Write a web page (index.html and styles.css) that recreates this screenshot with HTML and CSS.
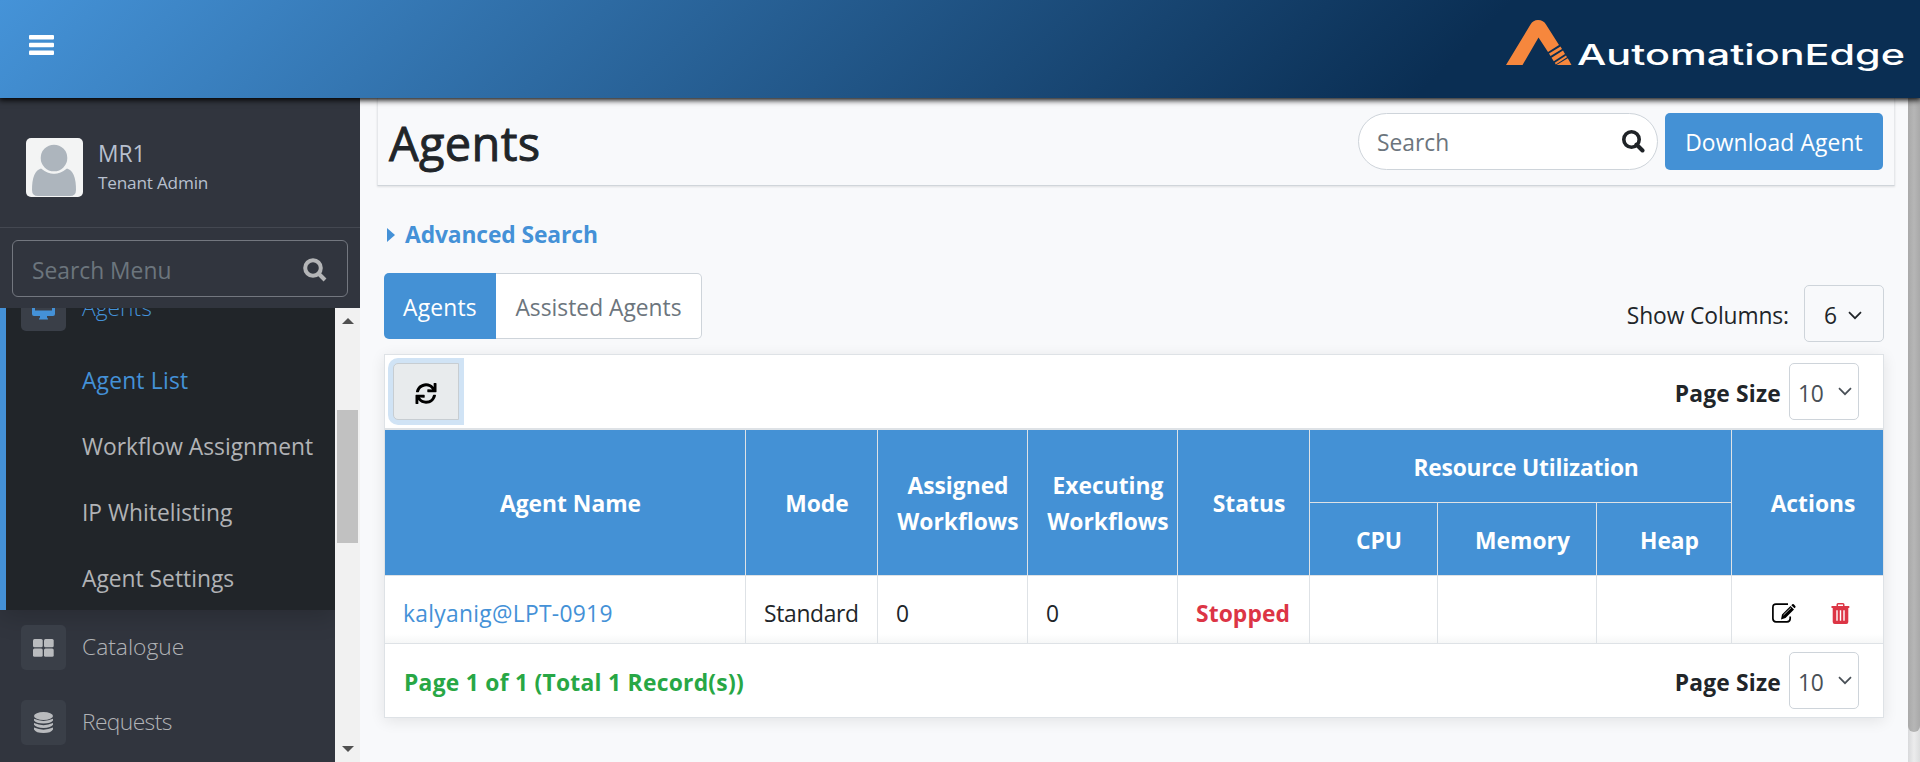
FILE: index.html
```html
<!DOCTYPE html>
<html lang="en">
<head>
<meta charset="utf-8">
<title>Agents</title>
<link rel="stylesheet" href="styles.css">
</head>
<body>
<header class="topbar">
  <svg class="burger" width="25" height="20" viewBox="0 0 25 20"><rect y="0" width="25" height="4.6" rx="1"/><rect y="7.7" width="25" height="4.6" rx="1"/><rect y="15.4" width="25" height="4.6" rx="1"/></svg>
  <svg class="logo" width="400" height="60" viewBox="0 0 400 60">
    <path fill="#f6873d" d="M0 47 24.500 6.500Q27 2 32 2Q37.500 2 40 6.500L53 27 42 34 32.500 19.500 16.500 47Z"/>
    <path fill="#f6873d" d="M43 35.500 54.500 28.500 56 31 44.500 38ZM45.500 39.800 57 32.500 59 36 47.800 43.200ZM48.800 44.700 60 37.600 61 39.200 49.800 46.400ZM50.500 47 61.800 40.200 65.500 47Z"/>
    <text x="71" y="46.500" textLength="328" lengthAdjust="spacingAndGlyphs">AutomationEdge</text>
  </svg>
</header>
<div class="shell">
  <aside class="sidebar">
    <div class="profile">
      <svg class="avatar" width="57" height="59" viewBox="0 0 57 59"><rect width="57" height="59" rx="5" fill="#f3f4f4"/><path fill="#adb5bd" d="M15 30.500Q28 41 41 30.500Q50 33 50 52Q50 58 44 58H12Q6 58 6 52Q6 33 15 30.500Z"/><circle cx="28" cy="20" r="14.300" fill="#adb5bd" stroke="#f3f4f4" stroke-width="2"/></svg>
      <div class="who"><span class="who-name">MR1</span><span class="who-role">Tenant Admin</span></div>
    </div>
    <div class="menu-search"><div class="menu-input"><span>Search Menu</span>
      <svg width="24" height="24" viewBox="0 0 24 24" fill="none" stroke="#b4b5b7" stroke-width="4"><circle cx="10" cy="10" r="7.800"/><path d="M15.500 15.500 22 22"/></svg></div></div>
    <div class="menu-wrap">
      <nav class="menu">
        <section class="menu-active">
          <div class="item item-active"><i class="ico"><svg width="23" height="22" viewBox="0 0 23 22"><path fill="#4491d7" d="M2 0H21Q23 0 23 2V16Q23 18 21 18H15V19.500Q16 20 16 21.500H7Q7 20 8 19.500V18H2Q0 18 0 16V2Q0 0 2 0Z"/><path fill="#3a3f48" d="M3 3H20V12.500H3Z"/></svg></i><span>Agents</span></div>
          <a class="sub sub-on">Agent List</a>
          <a class="sub">Workflow Assignment</a>
          <a class="sub">IP Whitelisting</a>
          <a class="sub">Agent Settings</a>
        </section>
        <div class="item"><i class="ico"><svg width="21" height="18" viewBox="0 0 21 18" fill="#b9bbbe"><rect width="9.700" height="8.300" rx="1.500"/><rect x="11" width="9.700" height="8.300" rx="1.500"/><rect y="9.400" width="9.700" height="8.300" rx="1.500"/><rect x="11" y="9.400" width="9.700" height="8.300" rx="1.500"/></svg></i><span>Catalogue</span></div>
        <div class="item"><i class="ico"><svg width="19" height="21" viewBox="0 0 19 21" fill="#b9bbbe"><ellipse cx="9.500" cy="4" rx="9.500" ry="4"/><path d="M0 6.800Q9.500 11 19 6.800V8.500Q17 11.500 9.500 11.500Q2 11.500 0 8.500ZM0 11.100Q9.500 15.300 19 11.100V12.800Q17 15.900 9.500 15.900Q2 15.900 0 12.800ZM0 15.600Q9.500 19.800 19 15.600V17.500Q17 21 9.500 21Q2 21 0 17.500Z"/></svg></i><span class="tight">Requests</span></div>
      </nav>
      <div class="sbar"><b class="up"></b><b class="thumb"></b><b class="down"></b></div>
    </div>
  </aside>
  <main class="main">
    <div class="page-head">
      <h1>Agents</h1>
      <div class="pill"><span>Search</span><svg width="23" height="23" viewBox="0 0 23 23" fill="none" stroke="#1f2327" stroke-width="3.600"><circle cx="9.500" cy="9.500" r="7.700"/><path d="M14.500 14.500 20.500 20.500" stroke-width="4" stroke-linecap="round"/></svg></div>
      <button class="download"><span>Download Agent</span></button>
    </div>
    <div class="adv"><i></i><span>Advanced Search</span></div>
    <div class="tools">
      <div class="tabs"><span class="tab tab-on">Agents</span><span class="tab">Assisted Agents</span></div>
      <div class="cols"><span class="cols-label">Show Columns:</span><div class="cols-sel">6<svg width="14" height="9" viewBox="0 0 14 9"><path d="M1 1.200 7 7.200 13 1.200"/></svg></div></div>
    </div>
    <div class="card">
      <div class="bar bar-top">
        <button class="refresh"><svg width="22" height="21" viewBox="0 0 512 512"><path d="M440.650 12.570l4 82.770A247.160 247.160 0 0 0 255.830 8C134.730 8 33.910 94.920 12.290 209.820A12 12 0 0 0 24.090 224h49.050a12 12 0 0 0 11.670-9.260 175.910 175.910 0 0 1 317-56.940l-101.460-4.860a12 12 0 0 0-12.570 12v47.410a12 12 0 0 0 12 12H500a12 12 0 0 0 12-12V12a12 12 0 0 0-12-12h-47.370a12 12 0 0 0-11.980 12.570zM255.830 432a175.610 175.610 0 0 1-146-77.800l101.800 4.870a12 12 0 0 0 12.570-12v-47.400a12 12 0 0 0-12-12H12a12 12 0 0 0-12 12V500a12 12 0 0 0 12 12h47.350a12 12 0 0 0 12-12.600l-4.150-82.570A247.170 247.170 0 0 0 255.830 504c121.110 0 221.930-86.920 243.550-201.820a12 12 0 0 0-11.800-14.180h-49.050a12 12 0 0 0-11.670 9.260A175.860 175.860 0 0 1 255.830 432z"/></svg></button>
        <div class="size"><span>Page Size</span><div class="size-sel">10<svg width="14" height="9" viewBox="0 0 14 9"><path d="M1 1.200 7 7.200 13 1.200"/></svg></div></div>
      </div>
      <div class="grid">
        <div class="th tall">Agent Name</div><div class="th tall">Mode</div><div class="th tall">Assigned<br>Workflows</div><div class="th tall">Executing<br>Workflows</div><div class="th tall">Status</div><div class="th wide">Resource Utilization</div><div class="th tall">Actions</div>
        <div class="th">CPU</div><div class="th">Memory</div><div class="th">Heap</div>
        <div class="td link">kalyanig@LPT-0919</div><div class="td std">Standard</div><div class="td">0</div><div class="td">0</div><div class="td stopped">Stopped</div><div class="td"></div><div class="td"></div><div class="td"></div>
        <div class="td acts">
          <svg width="24" height="20" viewBox="0 0 24 20"><path fill="none" stroke="#000" stroke-width="1.700" d="M16 1.200H4Q.9 1.200 .9 4.500V15.500Q.9 18.800 4 18.800H15Q18.200 18.800 18.200 15.500V13.500"/><path d="M9 16.500 10 11.500 18.500 3 22 6.500 13.500 15ZM19.300 2.200 20.300 1.200Q21 .6 21.800 1.300L23.300 2.900Q24 3.600 23.300 4.400L22.500 5.200Z"/><path d="M11.500 12 19 4.800" stroke="#fff" stroke-width=".7"/></svg>
          <svg width="19" height="21" viewBox="0 0 19 21"><path fill="#dc3545" d="M5.500 3V1.500Q5.500 0 7 0H12Q13.500 0 13.500 1.500V3H18.300V5H17.300V19Q17.300 21 15.300 21H3.700Q1.700 21 1.700 19V5H.5V3ZM7 3H12V1.500H7Z"/><path d="M6 7.300V17.800M9.500 7.300V17.800M13 7.300V17.800" stroke="#fff" stroke-width="1.400"/></svg>
        </div>
      </div>
      <div class="bar bar-foot"><span class="total">Page 1 of 1 (Total 1 Record(s))</span>
        <div class="size"><span>Page Size</span><div class="size-sel">10<svg width="14" height="9" viewBox="0 0 14 9"><path d="M1 1.200 7 7.200 13 1.200"/></svg></div></div>
      </div>
    </div>
  </main>
  <div class="page-scroll"><b></b></div>
</div>
</body>
</html>
```
FILE: styles.css
```css
* { box-sizing: border-box; }
body { margin: 0; width: 1920px; height: 762px; overflow: hidden; background: #f8f9fb; color: #212529; font: 22.800px/36px "Open Sans", "Noto Sans", sans-serif; letter-spacing: 0; display: flex; flex-direction: column; }
svg { display: block; flex: none; }
span { white-space: nowrap; }
button { border: 0; padding: 0; font: inherit; letter-spacing: inherit; }

.topbar { position: relative; z-index: 2; flex: none; height: 98px; padding: 0 16px 0 29px; display: flex; justify-content: space-between; background: linear-gradient(135deg, #4593d8 0%, #0a2e53 75%); box-shadow: 0 1px 6px 1px #000; }
.burger { margin-top: 35px; fill: #fff; }
.logo { margin-top: 18px; margin-right: -2px; }
.logo text { font: 500 28.500px "Inter", sans-serif; letter-spacing: 0; fill: #fff; }

.shell { flex: 1; min-height: 0; display: flex; }
.sidebar { flex: none; width: 360px; background: #31353e; display: flex; flex-direction: column; }
.profile { flex: none; height: 130px; border-bottom: 1px solid #444851; padding: 40px 0 0 26px; display: flex; gap: 15px; }
.who { display: flex; flex-direction: column; color: #b8c0cf; }
.who-name { line-height: 32px; }
.who-role { font-size: 17.200px; line-height: 26px; letter-spacing: -0.2px; }
.menu-search { flex: none; height: 80px; padding: 12px; }
.menu-input { height: 57px; border: 1px solid #73777f; border-radius: 6px; padding: 2px 20px 0 19px; display: flex; align-items: center; justify-content: space-between; color: #6c757d; }
.menu-input span { padding-top: 2px; }
.menu-wrap { flex: 1; min-height: 0; display: flex; overflow: hidden; }
.menu { width: 335px; overflow: hidden; color: #b1b3b6; display: flex; flex-direction: column; }
.menu-active { flex: none; height: 302px; border-left: 6px solid #4491d7; background: #212529; box-shadow: 0 8px 22px rgba(0,0,0,.16); display: flex; flex-direction: column; }
.item { flex: none; height: 75px; padding-left: 21px; display: flex; align-items: center; gap: 16px; font-weight: 300; }
.item span { margin-top: -2px; }
.item-active { margin-top: -37px; padding-left: 15px; color: #4491d7; }
.tight { letter-spacing: -0.6px; }
.ico { width: 45px; height: 45px; border-radius: 5px; background: #3a3f48; display: flex; align-items: center; justify-content: center; }
.sub { height: 66px; line-height: 70px; padding-left: 76px; white-space: nowrap; }
.sub-on { color: #4491d7; letter-spacing: 0.2px; }
.sbar { width: 25px; background: #f1f1f1; display: flex; flex-direction: column; align-items: center; }
.up, .down { border: 6px solid transparent; }
.up { margin-top: 4px; border-bottom-color: #505050; }
.thumb { width: 21px; height: 133px; margin-top: 86px; background: #c1c1c1; }
.down { margin-top: 203px; border-top-color: #505050; }

.main { flex: 1; min-width: 0; padding-left: 17px; display: flex; flex-direction: column; }
.page-head { width: 1518px; height: 88px; border: 1px solid #e6e8eb; border-top: 0; border-bottom-color: #d0d5da; box-shadow: 0 1px 2px rgba(0,0,0,.1); padding: 15px 11px 0 11px; display: flex; align-items: flex-start; }
h1 { margin: -1px auto 0 0; font-weight: 500; font-size: 47px; line-height: 62px; letter-spacing: 0.3px; -webkit-text-stroke: 0.900px #212529; }
.pill { width: 300px; height: 57px; border: 1px solid #ced4da; border-radius: 29px; background: #fff; color: #6c757d; padding: 0 12px 0 18px; display: flex; align-items: center; justify-content: space-between; }
.pill span { padding-top: 3px; }
.download { width: 218px; height: 57px; margin-left: 7px; border-radius: 5px; background: #4491d5; color: #fff; letter-spacing: 0.150px; padding-top: 2px; }
.adv { height: 86px; padding: 11px 0 0 10px; display: flex; align-items: center; gap: 10px; color: #4491d7; font-weight: 700; letter-spacing: -0.100px; }
.adv i { border: 7px solid transparent; border-left: 8px solid #4491d7; border-right: 0; }
.tools { height: 82px; width: 1507px; padding-left: 7px; display: flex; justify-content: space-between; }
.tabs { display: flex; height: 66px; margin-top: 1px; }
.tab { width: 206px; border: 1px solid #ced4da; border-left: 0; border-radius: 0 5px 5px 0; background: #fff; color: #6c757d; display: flex; align-items: center; justify-content: center; padding-top: 4px; }
.tab-on { width: 112px; border: 0; border-radius: 5px 0 0 5px; background: #4491d5; color: #fff; letter-spacing: 0.200px; }
.cols { display: flex; align-items: center; height: 57px; margin-top: 13px; gap: 15px; }
.cols-label { padding-top: 5px; letter-spacing: -0.100px; }
.cols-sel { width: 80px; height: 57px; border: 1px solid #ced4da; border-radius: 5px; padding: 4px 0 0 19px; display: flex; align-items: center; gap: 11px; }
.cols-sel svg, .size-sel svg { fill: none; stroke: currentColor; stroke-width: 1.700; }

.card { margin-left: 7px; width: 1500px; height: 364px; border: 1px solid #dee2e6; background: #fff; box-shadow: 0 3px 14px rgba(0,0,0,.09); }
.bar { display: flex; justify-content: space-between; align-items: center; }
.bar-top { height: 75px; border-bottom: 2px solid #dee2e6; padding: 0 24px 0 8px; }
.refresh { width: 66px; height: 57px; border: 1px solid #c7cdd2; border-radius: 5px 0 0 5px; background: #e8ebed; box-shadow: 0 0 0 5px #d0e3f5; display: flex; align-items: center; justify-content: center; padding-top: 3px; }
.size { display: flex; align-items: center; gap: 8px; font-weight: 700; letter-spacing: 0.200px; }
.size > span { padding-top: 4px; }
.size-sel { width: 70px; height: 57px; border: 1px solid #ced4da; border-radius: 5px; padding: 4px 6px 0 8px; display: flex; align-items: center; justify-content: space-between; color: #495057; font-weight: 400; letter-spacing: -0.300px; }
.size-sel svg { margin-bottom: 5px; }
.grid { display: grid; grid-template-columns: 361px 132px 150px 150px 132px 128px 159px 135px 151px; grid-template-rows: 73px 73px 67px; }
.th { background: #4491d5; color: #fff; font-weight: 700; border-right: 1px solid #dee2e6; border-bottom: 1px solid #dee2e6; display: flex; align-items: center; justify-content: center; text-align: center; padding: 3px 0 0 11px; }
.tall { grid-row: 1 / 3; }
.wide { grid-column: 6 / 9; letter-spacing: -0.200px; }
.th:nth-child(7) { grid-column: 9; border-right: 0; }
.th:nth-child(8) { grid-column: 6; }
.td { border-right: 1px solid #dee2e6; padding: 8px 0 0 18px; display: flex; align-items: center; white-space: nowrap; background: linear-gradient(#fff 58px, #f6f7f7); }
.td:last-child { border-right: 0; }
.std { letter-spacing: -0.300px; }
.link { color: #4491d7; letter-spacing: 0.300px; }
.stopped { color: #dc3545; font-weight: 700; letter-spacing: 0.100px; }
.acts { padding: 7px 0 0 40px; gap: 35px; }
.bar-foot { border-top: 1px solid #dee2e6; height: 74px; padding: 0 24px 0 19px; }
.total { color: #28a745; font-weight: 700; padding-top: 4px; letter-spacing: 0.280px; }
.page-scroll { width: 12px; background: linear-gradient(90deg, #d8d9db, #ececed 50%, #dcddde); flex: none; }
.page-scroll b { display: block; height: 634px; border-radius: 0 0 6px 6px; background: linear-gradient(90deg, #a9a9a9, #b6b6b6 50%, #a9a9a9); }
```
